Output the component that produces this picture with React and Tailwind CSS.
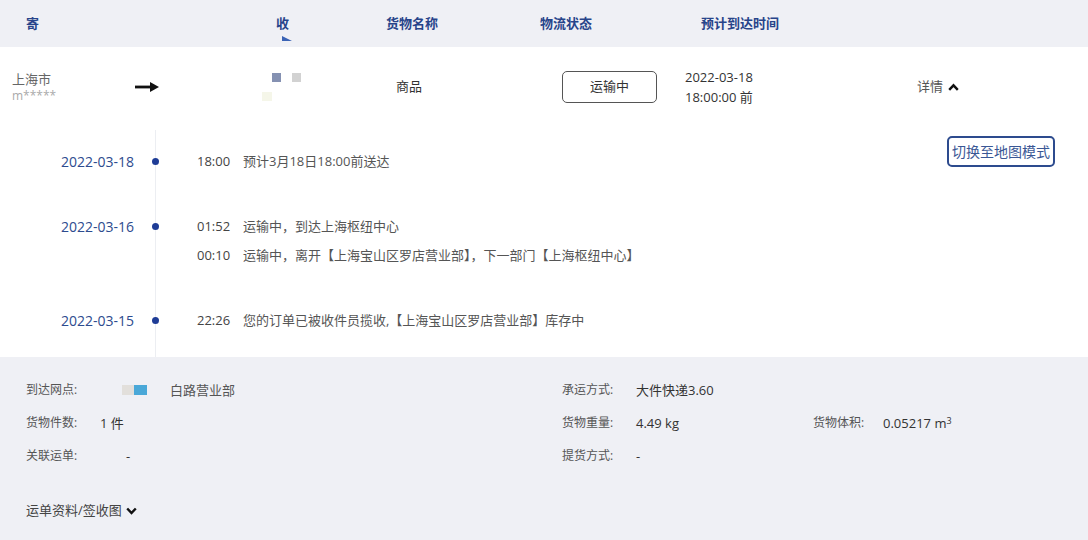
import React from "react";

const font = { fontFamily: '"Open Sans", "Noto Sans CJK SC", sans-serif' };

function Arrow() {
  return (
    <svg width="24" height="10" viewBox="0 0 24 10" className="block">
      <rect x="0" y="3.6" width="17" height="2.8" fill="#111" />
      <polygon points="15,0 24,5 15,10" fill="#111" />
    </svg>
  );
}

function ChevronUp() {
  return (
    <svg width="11" height="8" viewBox="0 0 11 8" className="block">
      <polyline points="1.2,6.8 5.5,2.3 9.8,6.8" fill="none" stroke="#111" strokeWidth="2.4" />
    </svg>
  );
}

function ChevronDown() {
  return (
    <svg width="11" height="8" viewBox="0 0 11 8" className="block">
      <polyline points="1.2,1.5 5.5,6 9.8,1.5" fill="none" stroke="#111" strokeWidth="2.4" />
    </svg>
  );
}

function Event({ time, text }) {
  return (
    <div className="flex h-[20px] items-center text-[13px]">
      <span className="w-[46px] text-[#444]">{time}</span>
      <span className="text-[#555]">{text}</span>
    </div>
  );
}

export default function App() {
  return (
    <div className="w-[1088px] h-[540px] bg-[#eff0f5] overflow-hidden" style={font}>
      {/* header */}
      <div className="flex items-center h-[47px] text-[13px] font-bold text-[#27448a]">
        <div className="w-[276px] pl-[26px]">寄</div>
        <div className="w-[110px] relative">
          收
          <svg width="10" height="5" viewBox="0 0 10 5" className="absolute left-[6px] top-[22px]">
            <polygon points="0,0 0,5 10,5" fill="#3b63b5" />
          </svg>
        </div>
        <div className="w-[154px]">货物名称</div>
        <div className="w-[161px]">物流状态</div>
        <div>预计到达时间</div>
      </div>

      {/* white area */}
      <div className="bg-white">
        {/* main row */}
        <div className="flex items-center h-[83px] pb-[4px]">
          <div className="w-[135px] pl-[12px] flex flex-col">
            <span className="text-[13px] text-[#666] leading-[18px]">上海市</span>
            <span className="text-[12px] text-[#aaa] leading-[16px]">m*****</span>
          </div>
          <Arrow />
          <div className="w-[124px] ml-[113px] flex flex-col">
            <div className="flex gap-[11px]">
              <span className="w-[9px] h-[9px] bg-[#8591b2]" />
              <span className="w-[9px] h-[9px] bg-[#d2d2d2]" />
            </div>
            <span className="w-[10px] h-[9px] bg-[#f5f6e9] mt-[10px] ml-[-10px]" />
          </div>
          <div className="w-[166px] text-[13px] text-[#333]">商品</div>
          <div className="w-[95px] h-[32px] border border-[#555] rounded-[5px] flex items-center justify-center text-[13px] text-[#333]">
            运输中
          </div>
          <div className="ml-[28px] w-[232px] flex flex-col text-[13px] text-[#333] leading-[20px]">
            <span>2022-03-18</span>
            <span>18:00:00 前</span>
          </div>
          <div className="flex items-center gap-[5px] text-[13px] text-[#555]">
            <span>详情</span>
            <ChevronUp />
          </div>
        </div>

        {/* timeline */}
        <div className="flex flex-col">
          <div className="flex">
            <div className="w-[155px] pr-[21px] pt-[22px] text-right text-[14px] leading-[20px] text-[#2d4b8e]">2022-03-18</div>
            <div className="flex-1 border-l border-[#eceef2] flex items-start justify-between relative">
              <span className="absolute left-[-4px] top-[28px] w-[7px] h-[7px] rounded-full bg-[#1e3c96]" />
              <div className="ml-[41px] mt-[22px] mb-[25px]">
                <Event time="18:00" text="预计3月18日18:00前送达" />
              </div>
              <div className="mt-[6px] mr-[33px] w-[108px] h-[31px] border-2 border-[#2d4b8e] rounded-[5px] flex items-center justify-center text-[14px] text-[#3a5795]">
                切换至地图模式
              </div>
            </div>
          </div>

          <div className="flex">
            <div className="w-[155px] pr-[21px] pt-[20px] text-right text-[14px] leading-[20px] text-[#2d4b8e]">2022-03-16</div>
            <div className="flex-1 border-l border-[#eceef2]">
              <div className="relative pt-[20px] pb-[25px]">
                <span className="absolute left-[-4px] top-[26px] w-[7px] h-[7px] rounded-full bg-[#1e3c96]" />
                <div className="ml-[41px] flex flex-col gap-[9px]">
                  <Event time="01:52" text="运输中，到达上海枢纽中心" />
                  <Event time="00:10" text="运输中，离开【上海宝山区罗店营业部】，下一部门【上海枢纽中心】" />
                </div>
              </div>
            </div>
          </div>

          <div className="flex">
            <div className="w-[155px] pr-[21px] pt-[20px] text-right text-[14px] leading-[20px] text-[#2d4b8e]">2022-03-15</div>
            <div className="flex-1 border-l border-[#eceef2]">
              <div className="relative pt-[20px] pb-[26px]">
                <span className="absolute left-[-4px] top-[26px] w-[7px] h-[7px] rounded-full bg-[#1e3c96]" />
                <div className="ml-[41px]">
                  <Event time="22:26" text="您的订单已被收件员揽收,【上海宝山区罗店营业部】库存中" />
                </div>
              </div>
            </div>
          </div>
        </div>
      </div>

      {/* details */}
      <div className="pl-[26px] pt-[23px]">
        <div className="grid grid-cols-[536px_251px_1fr] gap-y-[13px] text-[13px] leading-[20px]">
          <div className="flex items-center">
            <span className="w-[96px] text-[12px] text-[#555]">到达网点:</span>
            <span className="w-[12px] h-[10px] bg-[#e2dfdb]" />
            <span className="w-[13px] h-[10px] bg-[#4aa8d8]" />
            <span className="ml-[23px] text-[#555]">白路营业部</span>
          </div>
          <div className="flex items-center">
            <span className="w-[74px] text-[12px] text-[#555]">承运方式:</span>
            <span className="text-[#333]">大件快递3.60</span>
          </div>
          <div />

          <div className="flex items-center">
            <span className="w-[74px] text-[12px] text-[#555]">货物件数:</span>
            <span className="text-[#333]">1 件</span>
          </div>
          <div className="flex items-center">
            <span className="w-[74px] text-[12px] text-[#555]">货物重量:</span>
            <span className="text-[#333]">4.49 kg</span>
          </div>
          <div className="flex items-center">
            <span className="w-[70px] text-[12px] text-[#555]">货物体积:</span>
            <span className="text-[#333]">
              0.05217 m<sup className="text-[9px]">3</sup>
            </span>
          </div>

          <div className="flex items-center">
            <span className="w-[100px] text-[12px] text-[#555]">关联运单:</span>
            <span className="text-[#333]">-</span>
          </div>
          <div className="flex items-center">
            <span className="w-[74px] text-[12px] text-[#555]">提货方式:</span>
            <span className="text-[#333]">-</span>
          </div>
          <div />
        </div>

        <div className="mt-[35px] flex items-center gap-[4px] h-[20px] text-[13px] text-[#444]">
          <span>运单资料/签收图</span>
          <ChevronDown />
        </div>
      </div>
    </div>
  );
}
